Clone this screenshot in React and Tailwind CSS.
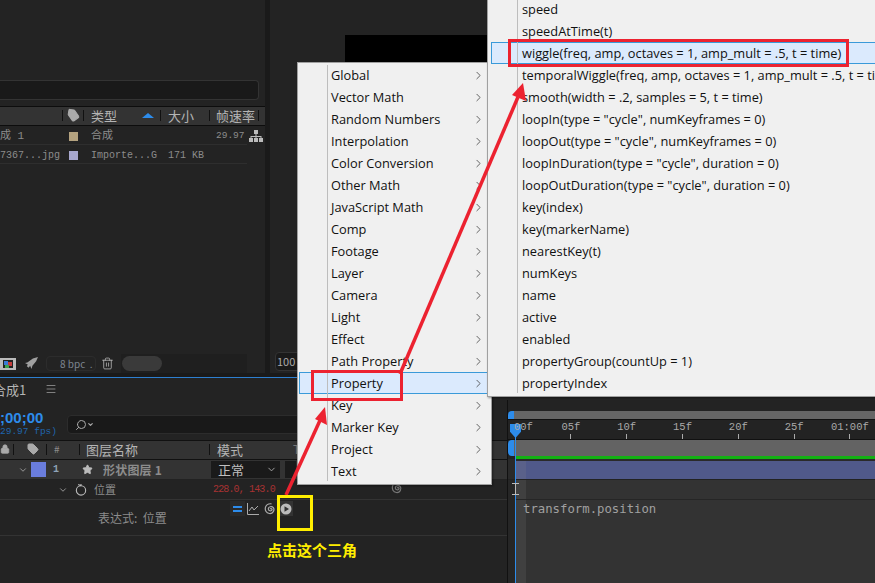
import { ChevronDown, ChevronRight, Menu, Search, Star, Tag, Trash2, Lock } from "lucide-react";

const menuFont = { fontFamily: '"Open Sans", sans-serif' };

const leftItems = ["Global", "Vector Math", "Random Numbers", "Interpolation", "Color Conversion", "Other Math", "JavaScript Math", "Comp", "Footage", "Layer", "Camera", "Light", "Effect", "Path Property", "Property", "Key", "Marker Key", "Project", "Text"];

const rightItems = ["speed", "speedAtTime(t)", "wiggle(freq, amp, octaves = 1, amp_mult = .5, t = time)", "temporalWiggle(freq, amp, octaves = 1, amp_mult = .5, t = time)", "smooth(width = .2, samples = 5, t = time)", "loopIn(type = \"cycle\", numKeyframes = 0)", "loopOut(type = \"cycle\", numKeyframes = 0)", "loopInDuration(type = \"cycle\", duration = 0)", "loopOutDuration(type = \"cycle\", duration = 0)", "key(index)", "key(markerName)", "nearestKey(t)", "numKeys", "name", "active", "enabled", "propertyGroup(countUp = 1)", "propertyIndex"];

const ticks = ["05f", "10f", "15f", "20f", "25f", "01:00f"];

function Divider({ className = "" }) {
  return <span className={`w-px h-[11px] bg-[#111] shrink-0 ${className}`} />;
}

function Spiral({ className = "" }) {
  return (
    <svg viewBox="0 0 14 14" className={className} fill="none" stroke="currentColor" strokeWidth="1.2">
      <path d="M7.2 7.2c0-1 1.9-1 1.9.4 0 1.6-3.6 1.8-3.8-.6C5.100 4.700 8.800 3.700 10.300 5.700c1.700 2.300-.3 6.300-4 5.800C3.100 11 1.700 8 2.500 5.200 3.200 2.900 5.500 1.500 8.500 1.800" />
    </svg>
  );
}

export default function App() {
  return (
    <div className="relative w-[875px] h-[583px] overflow-hidden bg-[#232323] flex flex-col" style={{ fontFamily: '"Noto Sans CJK SC", sans-serif' }}>
      {/* upper panels */}
      <div className="h-[373px] flex shrink-0">
        <div className="w-[265px] pt-[80px] flex flex-col shrink-0">
          <div className="h-[20px] w-[259px] bg-[#191919] border border-[#333] border-l-0 rounded-r-sm" />
          <div className="mt-[6px] h-[20px] border-t border-b border-[#0d0d0d] bg-[#333] flex items-center text-[13px] leading-none text-[#b4b4b4] pb-[2px]">
            <span className="w-[63px] flex justify-end shrink-0"><Divider /></span>
            <span className="w-[21px] flex items-center justify-between pl-[4px] shrink-0">
              <Tag size={13} className="fill-[#aaa] text-[#aaa] rotate-[10deg]" />
              <Divider />
            </span>
            <span className="w-[77px] flex items-center justify-between pl-[7px] shrink-0">
              <span>类型</span>
              <span className="flex items-center gap-[6px]">
                <span className="w-0 h-0 border-l-[6px] border-r-[6px] border-b-[5px] border-l-transparent border-r-transparent border-b-[#2d8ceb]" />
                <Divider />
              </span>
            </span>
            <span className="w-[49px] flex items-center justify-between pl-[7px] shrink-0">
              <span>大小</span>
              <Divider />
            </span>
            <span className="w-[49px] flex items-center justify-between pl-[6px] shrink-0">
              <span className="whitespace-nowrap">帧速率</span>
              <Divider />
            </span>
          </div>
          <div className="h-[19px] w-[247px] flex items-center border-b border-[#2e2e2e] text-[10px] text-[#8c8c8c] relative pt-[2px]" style={{ fontFamily: '"Liberation Mono", "Noto Sans CJK SC", monospace' }}>
            <span className="w-[63px] text-[11px] whitespace-pre">成 1</span>
            <span className="w-[28px] pl-[6px] flex"><span className="w-[9px] h-[9px] bg-[#b4a27f]" /></span>
            <span className="w-[77px] text-[11px]">合成</span>
            <span className="w-[48px]" />
            <span className="text-[9.5px]">29.97</span>
            <svg viewBox="0 0 14 12" className="w-[14px] h-[12px] absolute left-[249px] text-[#bbb]" fill="currentColor">
              <path d="M5 0h4v4H5zM0 8h4v4H0zM5 8h4v4H5zM10 8h4v4h-4zM6.500 4h1v2H12.500v2h-1V7h-4v1h-1V7h-4v1h-1V6h5z" />
            </svg>
          </div>
          <div className="h-[19px] w-[247px] flex items-center border-b border-[#2e2e2e] text-[10px] text-[#8c8c8c] pt-[2px]" style={{ fontFamily: '"Liberation Mono", monospace' }}>
            <span className="w-[69px] whitespace-pre overflow-hidden">7367...jpg</span>
            <span className="w-[22px] flex"><span className="w-[9px] h-[9px] bg-[#a8a8ce]" /></span>
            <span className="w-[77px]">Importe...G</span>
            <span>171 KB</span>
          </div>
          <div className="mt-auto h-[19px] flex items-center w-[247px]">
            <svg viewBox="0 0 16 12" className="w-[16px] h-[12px] shrink-0">
              <rect x="0" y="0" width="16" height="12" fill="#bbb" />
              <rect x="3" y="2" width="10" height="8" fill="#222" />
              <rect x="4" y="3" width="4" height="4" fill="#3a7bd5" />
              <rect x="8" y="4" width="4" height="4" fill="#c43a3a" />
              <rect x="5" y="7" width="4" height="3" fill="#3fa34d" />
            </svg>
            <svg viewBox="0 0 14 14" className="w-[13px] h-[13px] ml-[9px] shrink-0" fill="#a0a0a0">
              <path d="M14 0 8.500 1.500 2.500 6 0 6.500l3 1.500-1 2 2 1.500 1.500-2L7 13l1-3.500 4-5z" />
            </svg>
            <span className="ml-[8px] w-[50px] h-[15px] shrink-0 border border-[#2c2c2c] rounded-sm text-[10px] leading-[13px] text-[#7d8590] pl-[13px] whitespace-pre">8 bpc  .</span>
            <Trash2 size={13} strokeWidth={1.4} className="ml-[5px] text-[#c0c0c0] shrink-0" />
            <span className="ml-[7px] flex-1 h-[19px] bg-[#1f1f1f] flex items-center">
              <span className="ml-[1px] w-[40px] h-[15px] rounded-full bg-[#3a3a3a]" />
            </span>
          </div>
        </div>
        <div className="w-[5px] bg-[#1a1a1a] shrink-0" />
        <div className="flex-1 flex flex-col pt-[35px]">
          <div className="ml-[75px] h-[60px] bg-black" />
          <div className="mt-auto mb-[2px] ml-[5px] w-[60px] h-[19px] bg-[#1a1a1a] border border-[#333] rounded-sm text-[11px] leading-[16px] text-[#aaa] pl-[1px]">100</div>
        </div>
      </div>
      <div className="h-[4px] bg-[#1a1a1a] shrink-0" />
      <div className="h-px bg-[#2d7fd0] shrink-0" />

      {/* timeline */}
      <div className="h-[22px] flex items-center text-[12px] text-[#b4b4b4] shrink-0 relative">
        <span className="-ml-[7px] w-[52px] whitespace-nowrap text-[13px] leading-none">合成1</span>
        <Menu size={12} strokeWidth={1.3} />
      </div>
      <div className="flex-1 flex">
        <div className="w-[507px] flex flex-col shrink-0">
          <div className="h-[40px] flex items-center pt-[6px] shrink-0">
            <div className="w-[67px] flex flex-col">
              <span className="text-[15px] leading-[17px] font-bold text-[#2d8ceb] whitespace-nowrap" style={{ fontFamily: '"Liberation Sans", sans-serif' }}>;00;00</span>
              <span className="text-[9.500px] leading-[12px] text-[#1f65ad] whitespace-nowrap" style={{ fontFamily: '"Liberation Mono", monospace' }}>29.97 fps)</span>
            </div>
            <div className="w-[240px] h-[19px] mt-[3px] bg-[#191919] rounded-sm border border-[#2c2c2c] flex items-center pl-[7px] text-[#aaa]">
              <Search size={12} className="-scale-x-100" />
              <ChevronDown size={7} strokeWidth={4} />
            </div>
          </div>
          <div className="h-[20px] bg-[#333] border-t border-[#111] border-b flex items-center text-[13px] leading-none text-[#b4b4b4] shrink-0 pb-[2px]">
            <span className="w-[14px] flex items-center justify-between shrink-0">
              <Lock size={10} className="text-[#aaa] fill-[#aaa]" />
              <Divider />
            </span>
            <span className="w-[32px] flex items-center justify-between pl-[13px] shrink-0">
              <Tag size={12} className="fill-[#aaa] text-[#aaa]" />
            </span>
            <Divider />
            <span className="w-[33px] flex items-center justify-between pl-[7px] text-[10px] text-[#8c8c8c] shrink-0">
              # <Divider />
            </span>
            <span className="w-[130px] flex items-center justify-between pl-[6px] shrink-0">
              <span className="whitespace-nowrap">图层名称</span>
              <Divider />
            </span>
            <span className="pl-[7px] w-[83px]">模式</span>
            <span className="text-[#777] text-[12px]">T</span>
          </div>
          <div className="h-[20px] bg-[#333] border-b border-[#222] flex items-center shrink-0">
            <ChevronDown size={10} className="ml-[18px] text-[#aaa] shrink-0" />
            <span className="ml-[3px] w-[15px] h-[15px] bg-[#6a7ddd] shrink-0" />
            <span className="ml-[7px] w-[29px] text-[10px] font-bold text-[#8fa3b8]" style={{ fontFamily: '"Liberation Mono", monospace' }}>1</span>
            <Star size={11} className="fill-[#bbb] text-[#bbb] shrink-0" />
            <span className="ml-[10px] w-[108px] text-[12px] tracking-[0.2px] font-bold text-[#8c8c8c] whitespace-nowrap">形状图层 1</span>
            <span className="w-[69px] h-[17px] bg-[#1a1a1a] flex items-center justify-between pl-[7px] pr-[3px] text-[13px] leading-none text-[#c0c0c0] shrink-0">
              正常
              <ChevronDown size={11} className="text-[#aaa]" />
            </span>
            <span className="ml-[5px] w-[11px] h-[17px] bg-[#1a1a1a] shrink-0" />
          </div>
          <div className="h-[20px] border-b border-[#333] flex items-center shrink-0">
            <ChevronDown size={10} className="ml-[58px] text-[#aaa] shrink-0" />
            <svg viewBox="0 0 12 14" className="ml-[7px] w-[12px] h-[13px] text-[#bbb] shrink-0" fill="none" stroke="currentColor" strokeWidth="1.200">
              <circle cx="6" cy="8" r="5" />
              <path d="M3 1.500 6 3M6 3V1" />
            </svg>
            <span className="ml-[7px] w-[119px] text-[11px] text-[#8c8c8c]">位置</span>
            <span className="w-[177px] text-[10px] tracking-[-0.850px] text-[#a83232] whitespace-nowrap" style={{ fontFamily: '"Liberation Mono", monospace' }}>228.0, 143.0</span>
            <Spiral className="w-[14px] h-[14px] -mt-[4px] text-[#777] shrink-0" />
          </div>
          <div className="h-[36px] border-b border-[#333] flex shrink-0 relative">
            <span className="ml-[98px] mt-[10px] w-[132px] text-[12px] leading-[15px] text-[#8c8c8c] whitespace-pre">表达式:  位置</span>
            <div className="h-[15px] mt-[1px] flex items-center">
              <span className="w-[15px] h-[15px] bg-[#2a2a2a] flex flex-col gap-[2px] items-center justify-center">
                <span className="w-[9px] h-[2px] bg-[#2d8ceb]" />
                <span className="w-[9px] h-[2px] bg-[#2d8ceb]" />
              </span>
              <svg viewBox="0 0 12 12" className="ml-[2px] w-[12px] h-[12px] text-[#aaa]" fill="none" stroke="currentColor">
                <path d="M.500 0v11.500H12M2 8l3-4 2 3 4-4" />
              </svg>
              <Spiral className="ml-[4px] w-[14px] h-[14px] text-[#aaa]" />
              <span className="ml-[1px] w-[15px] h-[15px] bg-[#333] flex items-center justify-center">
                <svg viewBox="0 0 12 12" className="w-[12px] h-[12px]">
                  <circle cx="6" cy="6" r="5.500" fill="#bbb" />
                  <path d="M4.500 3.200v5.600L9 6z" fill="#333" />
                </svg>
              </span>
            </div>
          </div>
        </div>

        <div className="flex-1 border-l border-[#111] flex flex-col">
          <div className="h-[11px] shrink-0" />
          <div className="h-[8px] bg-[#666] border-l-[6px] border-[#2d8ceb] rounded-tl-[4px] shrink-0" />
          <div className="h-[21px] border-t border-b border-[#111] flex pl-[35px] text-[10.500px] leading-[14px] text-[#aaa] shrink-0" style={{ fontFamily: '"Liberation Mono", monospace' }}>
            {ticks.map((t) => (
              <div key={t} className="w-[55.800px] shrink-0 flex flex-col items-center">
                <span className="whitespace-nowrap">{t}</span>
                <span className="w-px h-[5px] bg-[#aaa]" />
              </div>
            ))}
          </div>
          <div className="h-[16px] bg-[#636363] border-l-[6px] border-[#2d8ceb] rounded-l-[4px] shrink-0" />
          <div className="h-[3px] bg-[#13b113] shrink-0 ml-[8px]" />
          <div className="h-[21px] flex pt-[2px] bg-[#2a2a2a] border-b border-[#222] shrink-0">
            <span className="w-[8px]" />
            <span className="w-[10px] bg-[#5a618a]" />
            <span className="flex-1 bg-[#50598a]" />
          </div>
          <div className="h-[20px] flex bg-[#333] border-b border-[#262626] shrink-0">
            <span className="w-[8px] bg-[#262626]" />
            <span className="w-[10px] bg-[#404040]" />
          </div>
          <div className="flex-1 flex bg-[#333]">
            <span className="w-[8px] bg-[#262626]" />
            <span className="w-[10px] bg-[#404040]" />
            <span className="-ml-[3px] mt-[1px] text-[12.300px] leading-[16px] text-[#a0a0a0] whitespace-nowrap" style={{ fontFamily: '"DejaVu Sans Mono", monospace' }}>transform.position</span>
          </div>
        </div>
      </div>

      {/* playhead, sits over the ruler and rows */}
      <div className="absolute left-[510px] top-[424px] w-[11px] h-[14px] bg-[#2d8ceb] [clip-path:polygon(0_0,100%_0,100%_55%,50%_100%,0_55%)]" />
      <span className="absolute left-[515px] top-[437px] w-px h-[146px] bg-[#2d8ceb]" />
      <span className="absolute left-[514px] top-[420px] text-[10.500px] leading-[14px] text-[#aaa]" style={{ fontFamily: '"Liberation Mono", monospace' }}>00f</span>
      <svg viewBox="0 0 7 12" className="absolute left-[512px] top-[483px] w-[7px] h-[12px]" fill="none" stroke="#bbb">
        <path d="M0 .500h7M0 11.500h7M3.500 .500v11" />
      </svg>

      {/* expression menu */}
      <div className="absolute left-[297px] top-[62px] w-[195px] h-[423px] bg-[#f0f0f0] border border-[#a0a0a0] pt-[1px] px-[1px] text-[12.800px] leading-[22px] text-[#111] shadow-[1px_1px_2px_rgba(0,0,0,0.4)]" style={menuFont}>
        <span className="absolute left-[29px] top-[2px] bottom-[3px] w-px bg-[#bdbdbd]" />
        {leftItems.map((item) => (
          <div key={item} className={`h-[22px] flex items-center justify-between pl-[31px] pr-[4px] border ${item === "Property" ? "bg-[#dbeafd] border-[#3a9ad9]" : "border-transparent"}`}>
            <span>{item}</span>
            <ChevronRight size={13} strokeWidth={1.500} className="text-[#444]" />
          </div>
        ))}
      </div>

      {/* property submenu */}
      <div className="absolute left-[487px] -top-[5px] w-[400px] h-[402px] bg-[#f0f0f0] border border-[#a0a0a0] pt-[2px] pl-[3px] text-[12.800px] leading-[22px] text-[#111] shadow-[1px_1px_2px_rgba(0,0,0,0.4)]" style={menuFont}>
        <span className="absolute left-[29px] top-0 bottom-[3px] w-px bg-[#bdbdbd]" />
        {rightItems.map((item) => (
          <div key={item} className={`h-[22px] flex items-center pl-[30px] border whitespace-nowrap ${item.startsWith("wiggle") ? "bg-[#dbeafd] border-[#3a9ad9]" : "border-transparent"}`}>
            {item}
          </div>
        ))}
      </div>

      {/* annotations */}
      <span className="absolute left-[311px] top-[370px] w-[92px] h-[31px] border-[3px] border-[#ec2230]" />
      <span className="absolute left-[508px] top-[39px] w-[341px] h-[28px] border-[3px] border-[#ec2230]" />
      <svg viewBox="0 0 875 583" className="absolute inset-0 w-[875px] h-[583px] pointer-events-none" fill="none">
        <path d="M286 495 322 416" stroke="#ec2230" strokeWidth="3.500" />
        <path d="M325 407 327 425 315 419z" fill="#ec2230" />
        <path d="M400 374 518 97" stroke="#ec2230" strokeWidth="3.500" />
        <path d="M523 83 526 101 512 95z" fill="#ec2230" />
      </svg>
      <span className="absolute left-[277px] top-[495px] w-[36px] h-[36px] border-[3px] border-[#ffee00]" />
      <span className="absolute left-[267px] top-[540px] text-[15px] leading-[20px] font-bold text-[#ffee00] whitespace-nowrap">点击这个三角</span>
    </div>
  );
}
